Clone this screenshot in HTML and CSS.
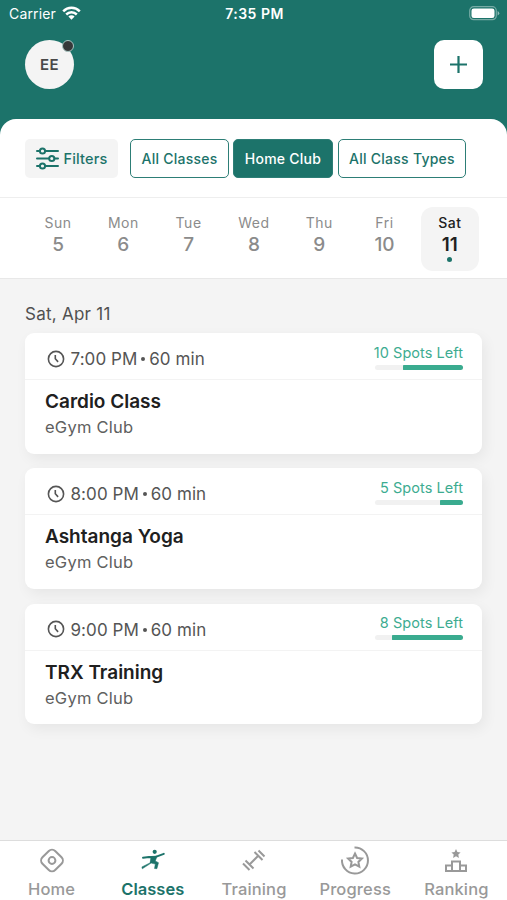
FILE: index.html
```html
<!DOCTYPE html>
<html lang="en">
<head>
<meta charset="utf-8">
<meta name="viewport" content="width=device-width, initial-scale=1">
<title>Classes</title>
<link rel="stylesheet" href="styles.css">
</head>
<body>
<div class="app">
  <header class="header">
    <div class="status">
      <div class="carrier"><span>Carrier</span>
        <svg width="19" height="14" viewBox="0 0 19 14" fill="none" stroke="#fff" stroke-width="2.5"><path d="M1.2 5.3a11.7 11.7 0 0 1 16.6 0M4.2 8.5a7.6 7.6 0 0 1 10.6 0"/><path d="M9.5 13.7 6.4 10.6a4.4 4.4 0 0 1 6.2 0z" fill="#fff" stroke="none"/></svg>
      </div>
      <span class="clock">7:35 PM</span>
      <svg class="battery" width="31" height="15" viewBox="0 0 31 15"><rect x=".7" y=".7" width="26.6" height="13" rx="4" fill="none" stroke="#fff" stroke-opacity=".4" stroke-width="1.2"/><rect x="2.5" y="2.5" width="23" height="9.5" rx="2.3" fill="#fff"/><path d="M28.6 5v4.5q1.7-.7 1.7-2.2T28.6 5" fill="#fff" opacity=".5"/></svg>
    </div>
    <div class="actions">
      <div class="avatar"><span>EE</span><i class="badge"></i></div>
      <button class="add" aria-label="Add"><svg width="18" height="18" viewBox="0 0 18 18" stroke="#1c736a" stroke-width="2.2"><path d="M8.5 0v17M0 8.5h17"/></svg></button>
    </div>
  </header>
  <section class="sheet">
    <div class="filters">
      <button class="filter"><svg width="23" height="23" viewBox="0 0 23 23" fill="none" stroke="#1c736a" stroke-width="2" stroke-linecap="round"><path d="M1 4h3M9 4h13M1 11.5h12M18.5 11.5H22M1 19h3M9 19h13"/><circle cx="6.5" cy="4" r="2.6"/><circle cx="15.8" cy="11.5" r="2.6"/><circle cx="6.5" cy="19" r="2.6"/></svg><span>Filters</span></button>
      <button class="chip classes">All Classes</button>
      <button class="chip club">Home Club</button>
      <button class="chip types">All Class Types</button>
    </div>
    <div class="week">
      <div class="day"><span>Sun</span><b>5</b></div>
      <div class="day"><span>Mon</span><b>6</b></div>
      <div class="day"><span>Tue</span><b>7</b></div>
      <div class="day"><span>Wed</span><b>8</b></div>
      <div class="day"><span>Thu</span><b>9</b></div>
      <div class="day"><span>Fri</span><b>10</b></div>
      <div class="day selected"><span>Sat</span><b>11</b><i></i></div>
    </div>
  </section>
  <main class="content">
    <h1>Sat, Apr 11</h1>
    <article class="card">
      <div class="card-top"><svg width="18" height="18" viewBox="0 0 18 18" fill="none" stroke="#555" stroke-width="1.6"><circle cx="9" cy="9" r="7.6"/><path d="M8.3 5v3.7l2.8 3.2"/></svg><span class="time">7:00 PM <i></i> 60 min</span><div class="spots"><span>10 Spots Left</span><div class="track"><div style="width:68%"></div></div></div></div>
      <div class="card-body"><h2>Cardio Class</h2><p>eGym Club</p></div>
    </article>
    <article class="card">
      <div class="card-top"><svg width="18" height="18" viewBox="0 0 18 18" fill="none" stroke="#555" stroke-width="1.6"><circle cx="9" cy="9" r="7.6"/><path d="M8.3 5v3.7l2.8 3.2"/></svg><span class="time">8:00 PM <i></i> 60 min</span><div class="spots"><span>5 Spots Left</span><div class="track"><div style="width:26%"></div></div></div></div>
      <div class="card-body"><h2>Ashtanga Yoga</h2><p>eGym Club</p></div>
    </article>
    <article class="card">
      <div class="card-top"><svg width="18" height="18" viewBox="0 0 18 18" fill="none" stroke="#555" stroke-width="1.6"><circle cx="9" cy="9" r="7.6"/><path d="M8.3 5v3.7l2.8 3.2"/></svg><span class="time">9:00 PM <i></i> 60 min</span><div class="spots"><span>8 Spots Left</span><div class="track"><div style="width:81%"></div></div></div></div>
      <div class="card-body"><h2>TRX Training</h2><p>eGym Club</p></div>
    </article>
  </main>
  <nav class="tabs">
    <div class="tab"><svg viewBox="0 0 30 30" fill="none" stroke="currentColor" stroke-width="2"><rect x="6" y="5.5" width="18" height="18" rx="4.5" transform="rotate(45 15 14.5)"/><circle cx="15" cy="14.5" r="3.4"/></svg><span>Home</span></div>
    <div class="tab active"><svg viewBox="0 0 30 30" fill="none" stroke="currentColor" stroke-linecap="round" stroke-linejoin="round"><circle cx="16.7" cy="5.8" r="2.1" fill="currentColor" stroke="none"/><path d="M5 11.8 11 11l6 .2 8.8-3.4" stroke-width="1.9"/><path d="m13.2 10.5 6-.5-1.9 5 3.2 1.7-1.6 6-2.4-.2.8-4.4-4.2-1L4.3 22.8l-.4-1.9 8-4z" fill="currentColor" stroke-width=".5"/></svg><span>Classes</span></div>
    <div class="tab"><svg viewBox="0 0 30 30" fill="none" stroke="currentColor" stroke-width="2"><path d="m10.5 18.5 9-9M6.5 14.5l8 8M4 17.5l6.5 6.5M15.5 6l8 8M19.5 4.5l6 6"/></svg><span>Training</span></div>
    <div class="tab"><svg viewBox="0 0 30 30" fill="none" stroke="currentColor" stroke-width="2"><path d="M14.5 1.5A13 13 0 1 1 2 13.5"/><path d="m15 7.5 2.1 4.5 4.8.6-3.5 3.3.9 4.8-4.3-2.4-4.3 2.4.9-4.8-3.5-3.3 4.8-.6z"/></svg><span>Progress</span></div>
    <div class="tab"><svg viewBox="0 0 30 30" fill="none" stroke="currentColor" stroke-width="2"><path d="M5 25v-5.5h6V25zm6 0v-9.5h8V25zm8 0v-5.5h6V25z"/><path d="m15 3 1.4 3 3.2.4-2.3 2.2.6 3.3-2.9-1.6-2.9 1.6.6-3.3-2.3-2.2 3.2-.4z" fill="currentColor" stroke="none"/></svg><span>Ranking</span></div>
  </nav>
</div>
</body>
</html>
```
FILE: styles.css
```css
* { box-sizing: border-box; }
body { margin: 0; font-family: Inter, "Liberation Sans", sans-serif; }
button { font: inherit; margin: 0; padding: 0; border: 0; }
.app { width: 507px; height: 900px; display: flex; flex-direction: column; background: #1c736a; overflow: hidden; }
.header { height: 119px; flex: none; color: #fff; }
.status { height: 27px; padding: 0 7px 0 9px; display: grid; grid-template-columns: 1fr auto 1fr; align-items: center; font-size: 14px; }
.carrier { display: flex; align-items: center; gap: 6px; letter-spacing: .15px; }
.carrier svg { margin-top: -2px; }
.clock { font-weight: 600; letter-spacing: .5px; }
.battery { justify-self: end; }
.actions { display: flex; justify-content: space-between; padding: 13px 24px 0 25px; }
.avatar { position: relative; width: 49px; height: 49px; border-radius: 50%; background: #f4f4f4; color: #494949; display: grid; place-items: center; font-size: 15px; font-weight: 600; letter-spacing: .5px; }
.badge { position: absolute; top: 0; right: 0; width: 12px; height: 12px; border-radius: 50%; background: #363839; border: 1px solid #a8c5c2; }
.add { width: 49px; height: 49px; border-radius: 10px; background: #fff; display: grid; place-items: center; }
.sheet { height: 160px; flex: none; background: #fff; border-radius: 16px 16px 0 0; border-bottom: 1px solid #e8e8e8; }
.filters { height: 79px; padding: 20px 25px 0; display: flex; align-items: flex-start; border-bottom: 1px solid #eee; color: #1c736a; font-size: 14px; font-weight: 500; }
.filters button { height: 39px; color: #1c736a; white-space: nowrap; }
.filters .filter { width: 93px; margin-right: 12px; display: flex; align-items: center; justify-content: center; gap: 5px; border-radius: 5px; background: #f4f4f4; font-size: 14.5px; letter-spacing: .15px; }
.chip { border: 1px solid #2d7e76; border-radius: 5px; background: #fff; letter-spacing: .25px; margin-right: 4px; }
.classes { width: 99px; }
.filters .club { width: 100px; margin-right: 5px; background: #1c736a; color: #fff; }
.types { width: 128px; }
.week { display: grid; grid-template-columns: repeat(7, 58px); column-gap: 7.3px; padding: 9px 0 0 29px; }
.day { height: 65px; border-radius: 12px; display: flex; flex-direction: column; align-items: center; padding-top: 6px; color: #8b8b8b; font-size: 14px; line-height: 19px; letter-spacing: .5px; }
.day b { font-size: 19px; font-weight: 500; line-height: 26px; letter-spacing: 0; }
.day.selected { height: 64px; color: #202020; background: #f4f4f4; font-weight: 500; }
.selected b { font-weight: 600; }
.selected i { width: 5px; height: 5px; margin-top: -1px; border-radius: 50%; background: #1c736a; }
.content { flex: 1; background: #f4f4f4; padding: 25px 25px 0; }
h1 { margin: 0 0 9.4px; font-size: 17px; font-weight: 400; line-height: 20px; color: #505050; letter-spacing: .25px; }
.card { height: 120.6px; margin-bottom: 14.5px; border-radius: 9px; background: #fff; box-shadow: 3px 5px 14px rgba(0,0,0,.06); }
.card-top { height: 47px; border-bottom: 1px solid #f3f3f3; padding: 1px 19px 0 22px; display: flex; align-items: center; }
.card-top > svg { margin-top: 4px; }
.time { margin: 5px 0 0 5.5px; font-size: 17px; letter-spacing: .08px; color: #555; white-space: nowrap; }
.time i { display: inline-block; width: 4px; height: 4px; border-radius: 50%; background: #555; vertical-align: 4px; margin: 0 -1px; }
.spots { width: 95px; margin-left: auto; color: #3dac91; font-size: 14.5px; line-height: 18px; letter-spacing: .05px; text-align: right; white-space: nowrap; }
.track { width: 88px; height: 5px; margin: 3px 0 0 auto; background: #f1f1f1; border-radius: 3px; display: flex; justify-content: flex-end; }
.track div { background: #3aab8f; border-radius: 1px 3px 3px 1px; }
.card-body { padding: 9px 20px; }
h2 { margin: 0; font-size: 19px; font-weight: 600; line-height: 26px; color: #202020; letter-spacing: 0; }
p { margin: -1px 0 0; font-size: 16.5px; line-height: 26px; color: #606060; letter-spacing: .25px; }
.tabs { height: 60px; flex: none; background: #fff; border-top: 1px solid #ddd; display: grid; grid-template-columns: repeat(5, 1fr); padding: 5px 0 0 1px; color: #999; }
.tab { display: flex; flex-direction: column; align-items: center; font-size: 16.5px; font-weight: 500; line-height: 20px; letter-spacing: .15px; }
.tab svg { width: 30px; height: 30px; margin-bottom: 3px; }
.active { color: #1c736a; font-weight: 600; letter-spacing: 0; }
```
